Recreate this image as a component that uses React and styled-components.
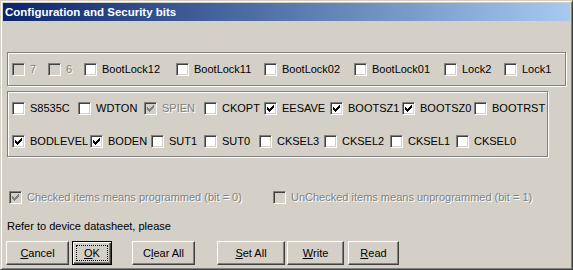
import React from "react";
import styled, { createGlobalStyle } from "styled-components";

const Global = createGlobalStyle`
  html, body { margin: 0; padding: 0; background: #d4d0c8; }
  body { font-family: "Liberation Sans", Arial, sans-serif; font-size: 11px; }
`;

const Window = styled.div`
  box-sizing: border-box;
  width: 573px;
  height: 270px;
  background: #d4d0c8;
  border: 1px solid;
  border-color: #d4d0c8 #404040 #404040 #d4d0c8;
  box-shadow: inset 1px 1px 0 #fff, inset -1px -1px 0 #808080;
  padding: 2px;
  display: flex;
  flex-direction: column;
`;

const TitleBar = styled.div`
  height: 18px;
  flex: none;
  display: flex;
  align-items: center;
  padding-left: 2px;
  background: linear-gradient(to right, #0a246a, #a6caf0);
  color: #fff;
  font-family: "Liberation Sans", Arial, sans-serif;
  font-weight: bold;
  font-size: 11.5px;
`;

const Client = styled.div`
  flex: 1;
  display: flex;
  flex-direction: column;
  align-items: flex-start;
  padding-left: 3px;
`;

const Group = styled.div`
  box-sizing: border-box;
  width: ${(p) => p.$w}px;
  height: ${(p) => p.$h}px;
  margin-top: ${(p) => p.$mt}px;
  margin-left: 1px;
  border: 1px solid #808080;
  box-shadow: inset 1px 1px 0 #fff, 1px 1px 0 #fff;
  padding: 10px 0 0 4px;
  display: flex;
  flex-direction: column;
  gap: 20px;
`;

const Row = styled.div`
  display: flex;
  align-items: center;
  height: 13px;
`;

const Item = styled.label`
  display: flex;
  align-items: center;
  flex: none;
  width: ${(p) => (p.$w ? `${p.$w}px` : "auto")};
  height: 13px;
  white-space: nowrap;
`;

const Box = styled.span`
  box-sizing: border-box;
  width: 13px;
  height: 13px;
  flex: none;
  border: 1px solid;
  border-color: #808080 #fff #fff #808080;
  box-shadow: inset 1px 1px 0 #404040, inset -1px -1px 0 #d4d0c8;
  background: ${(p) => (p.$disabled ? "#d4d0c8" : "#fff")};
  display: flex;
  align-items: center;
  justify-content: center;
  svg { display: block; }
`;

const Label = styled.span`
  margin-left: 5px;
  line-height: 13px;
  color: ${(p) => (p.$disabled ? "#808080" : "#000")};
  text-shadow: ${(p) => (p.$disabled ? "1px 1px 0 #fff" : "none")};
`;

const Tick = ({ color }) => (
  <svg width="7" height="7" viewBox="0 0 7 7" shapeRendering="crispEdges">
    <path
      fill={color}
      d="M6 0h1v1H6z M5 1h2v1H5z M0 2h1v1H0z M4 2h3v1H4z M0 3h2v1H0z M3 3h3v1H3z M0 4h5v1H0z M1 5h3v1H1z M2 6h1v1H2z"
    />
  </svg>
);

const Check = ({ label, w, checked, disabled }) => (
  <Item $w={w}>
    <Box $disabled={disabled}>{checked && <Tick color={disabled ? "#808080" : "#000"} />}</Box>
    <Label $disabled={disabled}>{label}</Label>
  </Item>
);

const LegendRow = styled(Row)`
  margin-top: 34px;
  margin-left: 3px;
`;

const Note = styled.div`
  margin-top: 16px;
  margin-left: 1px;
  line-height: 13px;
  color: #000;
`;

const ButtonBar = styled.div`
  display: flex;
  margin-top: 8px;
`;

const Button = styled.div`
  box-sizing: border-box;
  width: ${(p) => p.$w}px;
  height: 24px;
  margin-left: ${(p) => p.$ml || 0}px;
  display: flex;
  padding: 3px;
  background: #d4d0c8;
  border: 1px solid;
  border-color: ${(p) => (p.$default ? "#000" : "#fff #404040 #404040 #fff")};
  box-shadow: ${(p) =>
    p.$default
      ? "inset 1px 1px 0 #fff, inset -1px -1px 0 #404040, inset -2px -2px 0 #808080"
      : "inset -1px -1px 0 #808080"};
  color: #000;
`;

const Face = styled.span`
  flex: 1;
  display: flex;
  align-items: center;
  justify-content: center;
  border: 1px dotted ${(p) => (p.$focus ? "#000" : "transparent")};
  line-height: 13px;
  u { text-decoration: underline; text-underline-offset: 1px; }
`;

const row1 = [
  ["7", 36, false, true],
  ["6", 36, false, true],
  ["BootLock12", 92],
  ["BootLock11", 88],
  ["BootLock02", 90],
  ["BootLock01", 90],
  ["Lock2", 60],
  ["Lock1"],
];
const row2 = [
  ["S8535C", 66],
  ["WDTON", 66],
  ["SPIEN", 60, true, true],
  ["CKOPT", 60],
  ["EESAVE", 66, true],
  ["BOOTSZ1", 72, true],
  ["BOOTSZ0", 72, true],
  ["BOOTRST"],
];
const row3 = [
  ["BODLEVEL", 78, true],
  ["BODEN", 61, true],
  ["SUT1", 53],
  ["SUT0", 55],
  ["CKSEL3", 65],
  ["CKSEL2", 66],
  ["CKSEL1", 66],
  ["CKSEL0"],
];

const renderRow = (items) => (
  <Row>
    {items.map(([l, w, c, d]) => (
      <Check key={l} label={l} w={w} checked={c} disabled={d} />
    ))}
  </Row>
);

const buttons = [
  { pre: "", u: "C", post: "ancel", w: 63, ml: 0 },
  { pre: "", u: "O", post: "K", w: 40, ml: 3, def: true },
  { pre: "C", u: "l", post: "ear All", w: 63, ml: 20 },
  { pre: "", u: "S", post: "et All", w: 68, ml: 22 },
  { pre: "", u: "W", post: "rite", w: 57, ml: 2 },
  { pre: "", u: "R", post: "ead", w: 51, ml: 4 },
];

export default function App() {
  return (
    <>
      <Global />
      <Window>
        <TitleBar>Configuration and Security bits</TitleBar>
        <Client>
          <Group $w={559} $h={34} $mt={31}>
            {renderRow(row1)}
          </Group>
          <Group $w={541} $h={66} $mt={5}>
            {renderRow(row2)}
            {renderRow(row3)}
          </Group>
          <LegendRow>
            <Check label="Checked items means programmed (bit = 0)" w={264} checked disabled />
            <Check label="UnChecked items means unprogrammed (bit = 1)" disabled />
          </LegendRow>
          <Note>Refer to device datasheet, please</Note>
          <ButtonBar>
            {buttons.map((b) => (
              <Button key={b.post} $w={b.w} $ml={b.ml} $default={b.def}>
                <Face $focus={b.def}>
                  {b.pre}
                  <u>{b.u}</u>
                  {b.post}
                </Face>
              </Button>
            ))}
          </ButtonBar>
        </Client>
      </Window>
    </>
  );
}
